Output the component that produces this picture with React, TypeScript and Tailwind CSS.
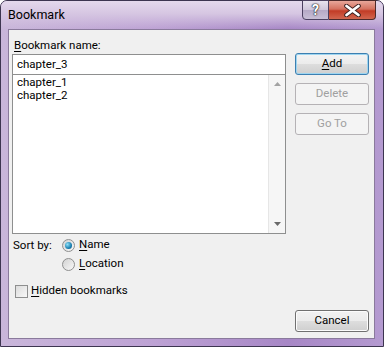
import React from "react";

const font = { fontFamily: '"Segoe UI", Roboto, "Liberation Sans", Arial, sans-serif' };

const Btn: React.FC<{ label: React.ReactNode; kind?: "default" | "normal" | "disabled"; className?: string }> = ({
  label,
  kind = "normal",
  className = "",
}) => {
  const look =
    kind === "default"
      ? "border-[#3c7fb1] shadow-[inset_0_0_0_1px_#9ed5f0] bg-[linear-gradient(#f4f4f4_0%,#ebebeb_50%,#dddddd_51%,#cfcfcf_100%)] text-black"
      : kind === "disabled"
      ? "border-[#b5b2b5] bg-[#f4f4f4] text-[#a0a0a0]"
      : "border-[#707070] shadow-[inset_0_0_0_1px_#fcfcfc] bg-[linear-gradient(#f2f2f2_0%,#ebebeb_50%,#dddddd_51%,#cfcfcf_100%)] text-black";
  return (
    <div
      className={`h-[22px] w-[74px] flex items-center justify-center rounded-[3px] border text-[11.5px] leading-none ${look} ${className}`}
    >
      {label}
    </div>
  );
};

const Radio: React.FC<{ checked?: boolean }> = ({ checked }) => (
  <div className="w-[13px] h-[13px] rounded-full border border-[#8e8f8f] bg-[linear-gradient(135deg,#d2d2d2,#f8f8f8)] flex items-center justify-center">
    {checked && (
      <div className="w-[7px] h-[7px] rounded-full bg-[radial-gradient(circle_at_35%_35%,#8fe0f8,#1a7fb0_60%,#0b4f7a)]" />
    )}
  </div>
);

export default function App() {
  return (
    <div className="w-[384px] h-[347px] bg-white" style={font}>
      <div className="relative w-[384px] h-[347px] rounded-t-[7px] border border-[#3d3550] bg-[linear-gradient(90deg,#c9b6da_0%,#bda2d4_40%,#a787c6_75%,#b49ad0_100%)] flex flex-col">
        {/* title bar */}
        <div className="h-[28px] shrink-0 flex items-center pl-[7px] pt-[1px] text-[12.5px] text-black bg-[linear-gradient(180deg,#e4d9ec_0%,#d6c6e2_45%,rgba(200,180,220,0)_100%)] rounded-t-[6px]">
          Bookmark
        </div>
        <div className="absolute top-[-1px] right-[7px] flex">
          <div className="w-[27px] h-[20px] rounded-bl-[4px] border border-[#4c4060] bg-[linear-gradient(180deg,#e8e2ee_0%,#cfc5da_50%,#b6a9c6_51%,#c9bfd6_100%)] flex items-center justify-center text-white text-[14px] font-bold [text-shadow:0_0_1px_#222,0_0_1px_#222,0_0_2px_#333]">
            ?
          </div>
          <div className="w-[47px] h-[20px] rounded-br-[4px] border border-l-0 border-[#4c2a2a] bg-[linear-gradient(180deg,#e8a79a_0%,#d4715f_45%,#c23c26_55%,#d2664f_100%)] flex items-center justify-center">
            <svg width="17" height="13" viewBox="0 0 17 13">
              <path d="M2.5 2 L14.5 11 M14.5 2 L2.5 11" stroke="#3a2020" strokeWidth="4.6" strokeLinecap="round" />
              <path d="M2.5 2 L14.5 11 M14.5 2 L2.5 11" stroke="#ffffff" strokeWidth="2.8" strokeLinecap="round" />
            </svg>
          </div>
        </div>

        {/* client area */}
        <div className="ml-[7px] mr-[8px] h-[310px] border border-[#8a7a9c] bg-[#f0f0f0] flex text-[11.5px] text-black">
          <div className="w-[274px] ml-[3px] flex flex-col">
            <div className="mt-[7px] h-[16px] pl-[2px] leading-[16px]">
              <span className="underline underline-offset-2">B</span>ookmark name:
            </div>
            <div className="mt-[1px] h-[21px] border border-[#8e8f8f] bg-white pl-[4px] leading-[19px]">chapter_3</div>
            <div className="h-[159px] border border-t-0 border-[#8e8f8f] bg-white flex">
              <div className="flex-1 pl-[4px] pt-[1px] leading-[13px]">
                <div>chapter_1</div>
                <div>chapter_2</div>
              </div>
              <div className="w-[17px] bg-[#f6f6f6] border-l border-[#e6e6e6] flex flex-col items-center justify-between py-[7px]">
                <svg width="7" height="4" viewBox="0 0 7 4">
                  <path d="M0 4 L3.5 0 L7 4 Z" fill="#a3a3a3" />
                </svg>
                <svg width="7" height="4" viewBox="0 0 7 4">
                  <path d="M0 0 L3.5 4 L7 0 Z" fill="#6a6a6a" />
                </svg>
              </div>
            </div>
            <div className="mt-[3px] flex">
              <div className="w-[50px] pl-[1px] leading-[16px]">Sort by:</div>
              <div className="flex flex-col gap-[3px]">
                <div className="flex items-center h-[16px]">
                  <Radio checked />
                  <span className="ml-[4px]">
                    <span className="underline underline-offset-2">N</span>ame
                  </span>
                </div>
                <div className="flex items-center h-[16px]">
                  <Radio />
                  <span className="ml-[4px]">
                    <span className="underline underline-offset-2">L</span>ocation
                  </span>
                </div>
              </div>
            </div>
            <div className="mt-[11px] flex items-center h-[16px] pl-[3px]">
              <div className="w-[13px] h-[13px] border border-[#8e8f8f] bg-[linear-gradient(135deg,#dcdcdc,#f8f8f8)]" />
              <span className="ml-[3px]">
                <span className="underline underline-offset-2">H</span>idden bookmarks
              </span>
            </div>
          </div>
          <div className="ml-[9px] flex flex-col pt-[23px] pb-[6px]">
            <Btn kind="default" label={<><span className="underline underline-offset-2">A</span>dd</>} />
            <Btn kind="disabled" className="mt-[8px]" label="Delete" />
            <Btn kind="disabled" className="mt-[8px]" label="Go To" />
            <Btn className="mt-auto" label="Cancel" />
          </div>
        </div>
      </div>
    </div>
  );
}
